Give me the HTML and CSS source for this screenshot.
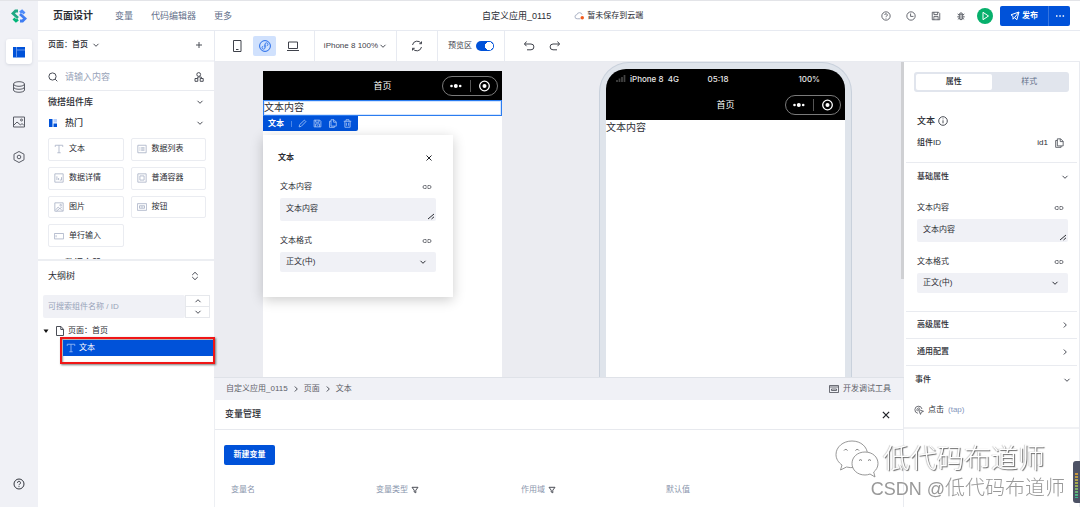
FILE: index.html
```html
<!DOCTYPE html>
<html lang="zh-CN">
<head>
<meta charset="utf-8">
<title>页面设计</title>
<link rel="stylesheet" href="styles.css">
</head>
<body>
<svg class="sprite" aria-hidden="true">
  <symbol id="down" viewBox="0 0 8 8"><path d="M1.500 2.800l2.500 2.500L6.500 2.800"/></symbol>
  <symbol id="up" viewBox="0 0 8 8"><path d="M1.500 5.200L4 2.700 6.500 5.200"/></symbol>
  <symbol id="right" viewBox="0 0 8 8"><path d="M2.800 1.500L5.300 4 2.800 6.500"/></symbol>
  <symbol id="cross" viewBox="0 0 8 8"><path d="M1.500 1.500l5 5M6.500 1.500l-5 5"/></symbol>
  <symbol id="link" viewBox="0 0 10 8"><path d="M4.300 2.500H2.500a1.500 1.500 0 0 0 0 3h1.800M5.700 2.500h1.800a1.500 1.500 0 0 1 0 3H5.700M3.500 4h3" stroke-width=".8"/></symbol>
  <symbol id="help" viewBox="0 0 12 12"><circle cx="6" cy="6" r="5"/><path d="M4.500 4.800a1.500 1.500 0 1 1 2.200 1.300Q6 6.500 6 7.200M6 8.200v.9"/></symbol>
  <symbol id="save" viewBox="0 0 12 12"><path d="M1.500 1.500h7.500l1.500 1.500v7.500h-9zM3.500 1.500v2.800h4.500V1.500M3.500 10.500V6.500h5v4M5.500 8.500h1"/></symbol>
  <symbol id="copy" viewBox="0 0 12 12"><path d="M4 1h4l3 3v5.500H4zM7.500 1v3.300H11M4 3H2v8.200h6.500V9.500"/></symbol>
  <symbol id="text" viewBox="0 0 12 12"><path d="M1.500 3.500v-2h9v2M6 1.500v9M4 10.500h4"/></symbol>
  <symbol id="picture" viewBox="0 0 12 12"><path d="M1 1h10v10H1zM2 9.500l3-3.500 2 2L9.500 6M3 11l4-3.500 3 3"/><circle cx="8" cy="3.800" r="1"/></symbol>
  <symbol id="resize" viewBox="0 0 8 8"><path d="M1 7l6-5M4.500 7L7 4.800"/></symbol>
  <symbol id="filter" viewBox="0 0 8 8"><path d="M1 1.300h6L4.800 4.200v2.600L3.200 6V4.200z"/></symbol>
  <symbol id="capsule" viewBox="0 0 56 20"><rect x=".5" y=".5" width="55" height="19" rx="9.500" fill="#000" stroke="#999" stroke-width=".8"/><path d="M28.500 4v12" stroke="#555"/><g fill="#fff" stroke="none"><circle cx="9.500" cy="10" r="1.300"/><circle cx="13.800" cy="10" r="2"/><circle cx="18.200" cy="10" r="1.300"/><circle cx="42.500" cy="10" r="2"/></g><circle cx="42.500" cy="10" r="4.800" stroke="#fff" stroke-width="1.300"/></symbol>
</svg>

<div class="app">
  <nav class="rail" aria-label="主导航">
    <svg class="logo" viewBox="0 0 16 14"><path d="M7 2H4.500L2 4.500 7 9" stroke="#20a884" stroke-width="2.800"/><path d="M2.500 9.500L5 12l2-1.500" stroke="#00b578" stroke-width="2.800"/><path d="M9 12h2.500L14 9.500 9 5" stroke="#3f7df2" stroke-width="2.800"/><path d="M13.500 4.500L11 2 9 3.500" stroke="#4c8bfa" stroke-width="2.800"/></svg>
    <button class="rail-btn active" aria-label="页面"><svg viewBox="0 0 12 12"><path d="M0 1h12v10.500H0z" fill="#0052d9" stroke="none"/><path d="M3.500 1v10.500M3.500 4H12" stroke="#8db2f2" stroke-width=".7"/></svg></button>
    <button class="rail-btn" aria-label="数据"><svg viewBox="0 0 12 12"><ellipse cx="6" cy="3" rx="5.500" ry="2.300"/><path d="M.5 3v6c0 3 11 3 11 0V3M.5 6c0 3 11 3 11 0"/></svg></button>
    <button class="rail-btn" aria-label="素材"><svg viewBox="0 0 12 12"><path d="M.5 1h11v10H.5zM1 9l3-3 3.500 3L9 7.500l2 2"/><circle cx="8.500" cy="4" r="1"/></svg></button>
    <button class="rail-btn" aria-label="设置"><svg viewBox="0 0 12 12"><path d="M6 .5l5 2.700v5.600L6 11.500 1 8.800V3.200z"/><circle cx="6" cy="6" r="1.800"/></svg></button>
    <button class="rail-btn last" aria-label="帮助"><svg><use href="#help"/></svg></button>
  </nav>

  <header class="header">
    <h1>页面设计</h1>
    <nav class="menu"><a href="#">变量</a><a href="#">代码编辑器</a><a href="#">更多</a></nav>
    <div class="app-name"><span>自定义应用_0115</span>
      <span class="cloud"><svg viewBox="0 0 12 10"><path d="M7 8H3.500a2.200 2.200 0 0 1-.4-4.400 3 3 0 0 1 5.800 0" stroke="#a3acc0"/><circle cx="9" cy="7" r="1.900" fill="#f25b1d" stroke="none"/></svg>暂未保存到云端</span></div>
    <div class="actions">
      <button aria-label="帮助"><svg><use href="#help"/></svg></button>
      <button aria-label="历史"><svg viewBox="0 0 12 12"><circle cx="6" cy="6" r="5"/><path d="M5.500 3v3.500h3.500"/></svg></button>
      <button aria-label="保存"><svg><use href="#save"/></svg></button>
      <button aria-label="调试"><svg viewBox="0 0 12 12"><path d="M4 4h4v4.500a2 2 0 0 1-4 0zM4.200 4a1.800 1.800 0 0 1 3.600 0M6 5v5M4 5L2 3.500M4 7H1.500M4 8.500L2.200 10M8 5l2-1.500M8 7h2.500M8 8.500L9.800 10"/></svg></button>
      <button class="play" aria-label="预览"><svg viewBox="0 0 16 16"><circle cx="8" cy="8" r="8" fill="#07b06c" stroke="none"/><path d="M6 4.300L11.500 8 6 11.700z" stroke="#fff"/></svg></button>
      <div class="publish"><button><svg viewBox="0 0 10 10"><path d="M1 3.800L9 1 6.800 8.800 4.600 6.500 3 8.200V5.500zM4.600 6.500L9 1"/></svg>发布</button><button aria-label="更多操作"><svg viewBox="0 0 10 10"><path d="M1 5h1.500M4.300 5h1.500M7.600 5h1.500" stroke-width="1.400"/></svg></button></div>
    </div>
  </header>

  <aside class="library">
    <div class="page-row"><button>页面：首页<svg class="i8"><use href="#down"/></svg></button><button aria-label="新增"><svg class="i8" viewBox="0 0 8 8"><path d="M4 1v6M1 4h6"/></svg></button></div>
    <div class="search-row"><svg class="i10" viewBox="0 0 10 10"><circle cx="4.500" cy="4.500" r="3.600"/><path d="M7.200 7.200L9.300 9.300"/></svg><input type="text" aria-label="搜索组件" placeholder="请输入内容"><svg class="i10" viewBox="0 0 10 10"><circle cx="4.700" cy="2.500" r="1.900"/><path d="M1 6.500h2.800v2.800H1zM3.800 6.500V5h3.500v1.500M6.200 6.500h3v2.800h-3z"/></svg></div>
    <div class="components">
      <button class="group">微搭组件库<svg class="i8"><use href="#down"/></svg></button>
      <button class="group"><svg class="i8 lead" viewBox="0 0 8 8"><g stroke="none"><path d="M0 0h3.500v8H0z" fill="#0052d9"/><path d="M4.500 0H8v3.500H4.500z" fill="#b9d0fb"/><path d="M4.500 4.500H8V8H4.500z" fill="#0052d9"/></g></svg><span>热门</span><svg class="i8"><use href="#down"/></svg></button>
      <div class="cards">
        <button><svg><use href="#text"/></svg>文本</button>
        <button><svg viewBox="0 0 12 12"><path d="M1 1.500h10v9H1zM5 4.500h4M5 6h4M5 7.500h4M3 4.500h1M3 6h1M3 7.500h1"/></svg>数据列表</button>
        <button><svg viewBox="0 0 12 12"><path d="M1 1h10v10H1zM3.500 8.500V4M5.500 8.500V6M7 8.500h2V5"/></svg>数据详情</button>
        <button><svg viewBox="0 0 12 12"><path d="M1 1h10v10H1zM3.500 3.500h5v5h-5z"/></svg>普通容器</button>
        <button><svg><use href="#picture"/></svg>图片</button>
        <button><svg viewBox="0 0 12 12"><path d="M.5 2h11v8H.5zM3 4.500h6v3H3zM4.500 6h3"/></svg>按钮</button>
        <button><svg viewBox="0 0 12 12"><path d="M.5 3h11v6.500H.5zM2.500 5v2.500"/></svg>单行输入</button>
      </div>
      <button class="group"><svg class="i8 lead" viewBox="0 0 8 8"><path d="M4 0l4 4-4 4-4-4z" fill="#0052d9" stroke="none"/></svg><span>数据容器</span><svg class="i8"><use href="#down"/></svg></button>
    </div>
    <section class="outline">
      <div class="outline-head"><h2>大纲树</h2><svg class="i10" viewBox="0 0 10 10"><path d="M2.200 4L5 1.300 7.800 4M2.200 6L5 8.700 7.800 6"/></svg></div>
      <div class="outline-search"><input type="text" aria-label="搜索大纲" placeholder="可搜索组件名称 / ID"><div class="steps"><button aria-label="上一个"><svg class="i8"><use href="#up"/></svg></button><button aria-label="下一个"><svg class="i8"><use href="#down"/></svg></button></div></div>
      <div class="tree-root"><svg class="i8" viewBox="0 0 8 8"><path d="M1.500 2.500h5L4 6z" fill="#111" stroke="none"/></svg><svg class="i10" viewBox="0 0 10 10"><path d="M1.500.5h4.500l2.500 2.800v6.200h-7zM5.800.5v3h2.700"/></svg>页面：首页</div>
      <div class="marked"><button class="tree-item"><svg class="i10"><use href="#text"/></svg>文本</button></div>
    </section>
  </aside>

  <div class="toolbar">
    <div class="tools devices"><button aria-label="手机"><svg viewBox="0 0 12 12"><path d="M2.500.5h7.500v11H2.500zM5 9.500h2.500"/></svg></button><button class="on" aria-label="小程序"><svg viewBox="0 0 12 12"><circle cx="6" cy="6" r="5.400"/><path d="M6 7.500V4.300a1.500 1.500 0 1 1 1.700 1.500M6 4.500v3.200a1.500 1.500 0 1 1-1.700-1.500" stroke-width=".8"/></svg></button><button aria-label="电脑"><svg viewBox="0 0 12 12"><path d="M1.500 2h9v6.500h-9zM0 10.500h12"/></svg></button></div>
    <div class="tools zoom"><button>iPhone 8 100%<svg class="i8"><use href="#down"/></svg></button></div>
    <div class="tools refresh"><button aria-label="刷新"><svg viewBox="0 0 12 12"><path d="M1.500 5a4.700 4.700 0 0 1 8.700-1.500M10.500 7a4.700 4.700 0 0 1-8.700 1.500M10.500 1.500v2.200H8.300M1.500 10.500V8.300h2.200"/></svg></button></div>
    <div class="tools preview"><label for="preview">预览区</label><input id="preview" class="switch" type="checkbox" role="switch" checked></div>
    <div class="tools history"><button aria-label="撤销"><svg viewBox="0 0 12 12"><path d="M3.500 1.500L1.500 4l2 2.200M1.500 4H8a2.800 2.800 0 0 1 0 5.800H4"/></svg></button><button aria-label="重做"><svg viewBox="0 0 12 12"><path d="M8.500 1.500l2 2.500-2 2.200M10.500 4H4a2.800 2.800 0 0 0 0 5.800h4"/></svg></button></div>
  </div>

  <main class="work">
    <div class="canvas">
      <div class="editor">
        <div class="nav-bar">首页<svg class="capsule"><use href="#capsule"/></svg></div>
        <div class="selected">文本内容</div>
        <div class="quick"><b>文本</b><i></i><button aria-label="编辑"><svg viewBox="0 0 12 12"><path d="M1.500 10.500l.7-3L8.500 1.500l2 2-6.200 6.300z"/></svg></button><button aria-label="保存"><svg><use href="#save"/></svg></button><button aria-label="复制"><svg><use href="#copy"/></svg></button><button aria-label="删除"><svg viewBox="0 0 12 12"><path d="M1 3h10M4 3V1h4v2M2.500 3v8h7V3M4.500 5v4M7.500 5v4"/></svg></button></div>
        <div class="popover">
          <div class="popover-head"><h2>文本</h2><button aria-label="关闭"><svg class="i8"><use href="#cross"/></svg></button></div>
          <div class="field"><label for="p-text">文本内容</label><svg class="link"><use href="#link"/></svg><div class="control"><textarea id="p-text">文本内容</textarea><svg class="grip"><use href="#resize"/></svg></div></div>
          <div class="field"><label for="p-format">文本格式</label><svg class="link"><use href="#link"/></svg><div class="control"><select id="p-format"><option>正文(中)</option></select><svg class="arrow"><use href="#down"/></svg></div></div>
        </div>
      </div>
      <div class="device">
        <div class="status"><span><svg class="i10" viewBox="0 0 10 8"><path d="M1 8V6M3.500 8V4.500M6 8V3M8.500 8V1" stroke="#444" stroke-width="1.700"/></svg>iPhone 8&nbsp; 4G</span><span>05:18</span><span>100%</span></div>
        <div class="nav-bar">首页<svg class="capsule"><use href="#capsule"/></svg></div>
        <div class="screen">文本内容</div>
      </div>
      <div class="scroll"></div>
    </div>
    <div class="crumbs"><span>自定义应用_0115</span><svg class="i8"><use href="#right"/></svg><span>页面</span><svg class="i8"><use href="#right"/></svg><span>文本</span><button><svg class="i10" viewBox="0 0 10 10"><path d="M.5 1.500h9v7h-9zM.5 3h9M2.500 5h5v1.500h-5z" stroke-width=".8"/></svg>开发调试工具</button></div>
    <section class="variables">
      <div class="var-head"><h2>变量管理</h2><button aria-label="关闭"><svg class="i10"><use href="#cross"/></svg></button></div>
      <div class="var-body"><button class="create">新建变量</button>
        <table><thead><tr><th>变量名</th><th>变量类型<svg class="i8"><use href="#filter"/></svg></th><th>作用域<svg class="i8"><use href="#filter"/></svg></th><th>默认值</th></tr></thead></table></div>
    </section>
  </main>

  <aside class="props">
    <div class="tabs"><button class="current">属性</button><button>样式</button></div>
    <div class="identity"><h2>文本<svg class="i10" viewBox="0 0 10 10"><circle cx="5" cy="5" r="4.300"/><path d="M5 4.300v3M5 2.500v.8"/></svg></h2><div class="id-row"><b>组件ID</b><span>id1</span><svg class="i10"><use href="#copy"/></svg></div></div>
    <section class="basic">
      <button class="fold">基础属性<svg class="i8"><use href="#down"/></svg></button>
      <div class="field"><label for="r-text">文本内容</label><svg class="link"><use href="#link"/></svg><div class="control"><textarea id="r-text">文本内容</textarea><svg class="grip"><use href="#resize"/></svg></div></div>
      <div class="field"><label for="r-format">文本格式</label><svg class="link"><use href="#link"/></svg><div class="control"><select id="r-format"><option>正文(中)</option></select><svg class="arrow"><use href="#down"/></svg></div></div>
    </section>
    <button class="fold">高级属性<svg class="i8"><use href="#right"/></svg></button>
    <button class="fold">通用配置<svg class="i8"><use href="#right"/></svg></button>
    <section class="events"><button class="fold">事件<svg class="i8"><use href="#down"/></svg></button><button class="event"><svg class="i10" viewBox="0 0 10 10"><path d="M3.800 8.300A3.600 3.600 0 1 1 8 4M3.500 6.200A1.700 1.700 0 1 1 6 3.500M4.500 4.500l5 1.800-2.200.9-.8 2.200z" stroke-width=".8"/></svg>点击 <span>(tap)</span></button></section>
  </aside>
</div>

<div class="watermark">
  <div class="account"><svg viewBox="0 0 44 38"><g fill="#fff" stroke="#8b8b8b" stroke-width=".9"><path d="M17 1C8 1 1 7 1 14.500c0 4.500 2.500 8 6 10.500L5.500 30l6-3c10 2.500 21-2.500 21-12.500C32.500 7 26 1 17 1z"/><path d="M30 12c-7.500 0-13 5-13 11.500S22.500 35 30 35c1.700 0 3.400-.3 5-1l5 3-1.300-5c2.600-2 4.300-5 4.300-8.500C43 17 37.500 12 30 12z"/></g><g fill="none" stroke="#777"><path d="M9 10.500a2 2 0 0 1 3.500 0M20.500 10.500a2 2 0 0 1 3.500 0M24 20.500a2 2 0 0 1 3 0M33 20.500a2 2 0 0 1 3 0"/></g></svg>低代码布道师</div>
  <div class="site"><span>CSDN @</span>低代码布道师</div>
</div>
<div class="meter"><i></i></div>
</body>
</html>
```
FILE: styles.css
```css
* { box-sizing: border-box; }
body { margin: 0; font: 8px/12px "Liberation Sans", "Noto Sans CJK SC", sans-serif; color: #2b2d34; background: #fff; overflow: hidden; }
button, input, select, textarea { font: inherit; color: inherit; border: 0; background: none; padding: 0; margin: 0; min-width: 0; outline: none; }
button { display: flex; align-items: center; justify-content: center; text-align: left; }
h1, h2 { margin: 0; font-weight: bold; }
a { color: inherit; text-decoration: none; }
svg { display: block; flex: none; width: 10px; height: 10px; fill: none; stroke: currentColor; stroke-width: 1; }
.sprite { position: absolute; width: 0; height: 0; }
.i8 { width: 8px; height: 8px; color: #4b4e57; }
.i10 { width: 10px; height: 10px; color: #4b4e57; }
::placeholder { color: #98a3b9; opacity: 1; }

.app { display: grid; grid-template: 30px 31px minmax(0, 1fr) / 38px 176px minmax(0, 1fr) 176px; height: 100vh; border-top: 1px solid #e3e4e8; }

.rail { grid-row: 1 / 4; display: flex; flex-direction: column; align-items: center; gap: 10px; padding: 8px 0 11px; background: #f0f1f6; }
.logo { width: 16px; height: 14px; margin-bottom: 6px; }
.rail-btn { width: 26px; height: 25px; border-radius: 3px; color: #5a5d66; }
.rail-btn svg { width: 12px; height: 12px; }
.rail-btn.active { background: #fff; box-shadow: 0 1px 3px #d4d7df; }
.rail-btn.last { margin-top: auto; color: #33363e; }

.header { grid-column: 2 / 5; display: flex; align-items: center; justify-content: space-between; padding: 0 10px 0 15px; border-bottom: 1px solid #e7eaf1; position: relative; }
.header h1 { font-size: 10px; }
.menu { display: flex; gap: 18px; margin: 0 auto 0 22px; font-size: 9px; color: #64718b; }
.app-name { position: absolute; left: 444px; display: flex; gap: 23px; font-size: 9px; }
.cloud { display: flex; align-items: center; gap: 2px; font-size: 8px; }
.cloud svg { width: 11px; }
.actions { display: flex; align-items: center; gap: 15px; color: #4b4e57; }
.play { margin: 0 -8px 0 -4px; }
.play svg { width: 16px; height: 16px; }
.publish { display: flex; height: 20px; background: #0052d9; color: #fff; border-radius: 2px; font-weight: bold; }
.publish button { gap: 2px; width: 48px; }
.publish button + button { width: 22px; border-left: 1px solid #3474e0; }

.library { grid-row: 2 / 4; grid-column: 2; display: flex; flex-direction: column; min-height: 0; }
.page-row { display: flex; justify-content: space-between; height: 31px; flex: none; padding: 0 11px 2px 10px; border-bottom: 2px solid #f3f4f7; }
.page-row button { gap: 4px; font-weight: 500; }
.search-row { display: flex; align-items: center; gap: 7px; height: 29px; flex: none; padding: 2px 10px 0; border-bottom: 1px solid #e9ebf0; }
.search-row input { flex: 1; font-size: 9px; }
.components { height: 168px; flex: none; overflow: hidden; }
.group { width: 100%; height: 21px; padding: 0 10px; font-size: 9px; font-weight: 500; justify-content: space-between; }
.group span { flex: 1; margin-left: 8px; }
.group .lead { margin-left: 1px; }
.cards { display: grid; grid-template-columns: 1fr 1fr; grid-template-rows: repeat(4, 1fr); gap: 6px 7px; height: 109px; margin: 5px 8px 5px 10px; }
.cards button { justify-content: flex-start; gap: 5px; padding: 0 5px; border: 1px solid #eaecf1; border-radius: 2px; }
.cards svg { color: #a9b2c6; }
.outline { border-top: 2px solid #eceef2; flex: 1; }
.outline-head { display: flex; justify-content: space-between; align-items: center; height: 29px; padding: 0 14px 0 10px; }
.outline-head h2 { font-size: 9px; font-weight: 400; }
.outline-search { display: flex; height: 23px; margin: 5px 4px 0 5px; }
.outline-search input { flex: 1; padding: 0 5px; background: #f0f1f6; border-radius: 2px; }
.steps { display: grid; width: 25px; border: 1px solid #e6e8ec; }
.steps button + button { border-top: 1px solid #e6e8ec; }
.tree-root { display: flex; align-items: center; height: 19px; margin-top: 3px; padding-left: 4px; gap: 3px; }
.tree-root .i8 { margin-right: 2px; }
.marked { position: relative; width: 155px; height: 27px; margin: -3px 0 0 22px; padding: 1px 0 0 1px; border: 2px solid #f01616; box-shadow: 1px 1px 2px #777, inset 1px 1px 2px #999; z-index: 1; }
.tree-item { width: 100%; height: 16px; background: #0052d9; color: #fff; justify-content: flex-start; gap: 3px; padding-left: 3px; }
.tree-item svg { color: #9dbef5; }

.toolbar { grid-column: 3 / 5; display: flex; border-bottom: 1px solid #e9ebf0; border-left: 1px solid #e7eaf1; color: #3f424b; }
.tools { display: flex; align-items: center; justify-content: center; border-right: 1px solid #e7eaf1; }
.tools svg { width: 12px; height: 12px; }
.tools .i8 { width: 8px; height: 8px; }
.devices { width: 100px; gap: 5px; }
.devices button { width: 23px; height: 20px; border-radius: 2px; }
.devices .on { background: #d0e1fd; color: #2169e8; }
.zoom { width: 82px; }
.zoom button { gap: 1px; }
.refresh { width: 41px; }
.preview { width: 67px; gap: 4px; }
.switch { appearance: none; width: 18px; height: 10px; border-radius: 5px; background: radial-gradient(circle at 13px 5px, #fff 4px, #0052d9 4px); }
.history { gap: 14px; padding-left: 18px; border: 0; }

.work { grid-column: 3; display: flex; flex-direction: column; min-height: 0; }
.canvas { position: relative; display: flex; justify-content: space-between; height: 316px; flex: none; padding: 0 52px 0 49px; background: #ebecf1; border-bottom: 1px solid #dfe2e8; }
.scroll { position: absolute; right: 0; top: 0; width: 3px; height: 217px; background: #cfd0d3; }
.editor { position: relative; width: 239px; margin-top: 9px; background: #fff; }
.nav-bar { position: relative; display: flex; align-items: center; justify-content: center; height: 29px; background: #000; color: #fff; font-size: 9px; }
.capsule { position: absolute; right: 4px; width: 56px; height: 20px; }
.selected { height: 16px; border: 1px solid #2b7cf0; font-size: 10px; line-height: 13px; box-shadow: inset 0 0 0 1px #d4e5fd; }
.quick { display: flex; align-items: center; width: 95px; height: 15px; padding: 0 5px; gap: 6px; background: #0052d9; color: #fff; border-radius: 0 0 2px 0; }
.quick i { width: 1px; height: 6px; background: #4c87e8; margin-left: 1px; }
.quick svg { width: 9px; height: 9px; color: #b9d1fa; }
.popover { position: absolute; left: 0; top: 64px; width: 190px; height: 162px; padding: 16px 17px; background: #fff; box-shadow: 0 3px 12px #0003; }
.popover-head { display: flex; justify-content: space-between; height: 14px; margin: 0 3px 16px -2px; }
.popover-head h2 { font-size: 8px; line-height: 14px; }
.popover-head .i8 { color: #202228; }
.field { display: grid; grid-template-columns: 1fr 10px; row-gap: 5px; align-items: center; margin-bottom: 14px; }
.field .link { width: 10px; height: 8px; margin-left: -4px; color: #4b4e57; }
.control { position: relative; grid-column: 1 / 3; display: flex; }
.control textarea, .control select { width: 100%; height: 20px; padding: 0 6px; background: #f0f1f6; border-radius: 2px; appearance: none; }
.control textarea { height: 23px; padding-top: 5px; resize: none; overflow: hidden; }
.grip { position: absolute; right: 1px; bottom: 1px; width: 8px; height: 8px; }
.arrow { position: absolute; right: 9px; top: 6px; width: 8px; height: 8px; }
.device { width: 253px; padding: 6px 6px 0; background: #dfe4eb; border: 1px solid #c9d1dc; border-bottom: 0; border-radius: 30px 30px 0 0; display: flex; flex-direction: column; }
.status { display: grid; grid-template-columns: 1fr auto 1fr; align-items: center; height: 20px; padding: 0 25px 0 10px; background: #000; color: #e8e8e8; border-radius: 22px 22px 0 0; font: 500 8px/12px Inter, sans-serif; }
.status span { display: flex; gap: 4px; }
.status span:last-child { justify-content: flex-end; }
.device .nav-bar { height: 31px; }
.screen { flex: 1; background: #fff; font-size: 10px; line-height: 15px; }
.crumbs { display: flex; align-items: center; gap: 4px; height: 22px; flex: none; padding: 0 13px 0 12px; background: #f0f1f6; color: #5d6068; }
.crumbs button { margin-left: auto; gap: 4px; }
.variables { flex: 1; border-left: 1px solid #edeff3; }
.var-head { display: flex; justify-content: space-between; height: 30px; padding: 0 13px 0 10px; border-bottom: 1px solid #e7e9ee; }
.var-head h2 { font-size: 9px; line-height: 29px; font-weight: 500; }
.var-head svg { color: #202228; }
.var-body { padding: 15px 9px; }
.create { width: 51px; height: 20px; background: #0052d9; color: #fff; border-radius: 2px; font-weight: bold; }
table { width: 100%; margin-top: 15px; border-collapse: collapse; table-layout: fixed; }
th { width: 145px; height: 20px; padding: 0 7px; text-align: left; font-weight: 400; color: #8a96ad; }
th:last-child { width: auto; }
th svg { display: inline-block; margin-left: 3px; vertical-align: middle; color: #33363e; }

.props { grid-column: 4; display: flex; flex-direction: column; align-items: stretch; padding-top: 10px; border-left: 1px solid #e9ebf0; border-right: 1px solid #e9ebf0; margin-left: -1px; }
.tabs { display: grid; grid-template-columns: 1fr 1fr; height: 20px; margin: 0 10px; padding: 2px; background: #e1e5ed; border-radius: 3px; color: #64718b; }
.tabs .current { background: #fff; border-radius: 2px; color: #202228; font-weight: 500; }
.identity { height: 71px; margin: 0 2px; padding: 22px 13px 0 11px; border-bottom: 1px solid #e9ebf0; }
.identity h2 { display: flex; align-items: center; gap: 3px; font-size: 9px; font-weight: 500; line-height: 14px; }
.id-row { display: flex; align-items: center; gap: 6px; margin-top: 9px; }
.id-row b { flex: 1; font-weight: 500; }
.fold { justify-content: space-between; height: 27px; margin: 0 2px; padding: 0 8px 0 11px; border-bottom: 1px solid #e9ebf0; font-weight: 500; }
.basic { height: 149px; margin: 0 2px; border-bottom: 1px solid #e9ebf0; }
.basic .fold { width: 100%; margin: 0 0 12px; border: 0; }
.basic .field { margin: 0 9px 14px 11px; }
.events { height: 63px; border-bottom: 2px solid #f0f1f4; }
.events .fold { width: 100%; margin: 0; padding-left: 11px; border: 0; }
.event { height: 34px; padding-left: 10px; gap: 4px; }
.event span { color: #8496bd; }

.watermark { position: fixed; right: 15px; bottom: 5px; color: #fff; text-shadow: 1px 1px 1px #666, -1px 0 1px #ccc; text-align: right; }
.account { display: flex; align-items: center; margin-right: 20px; gap: 4px; height: 34px; font-size: 27px; font-weight: 300; line-height: 34px; }
.account svg { width: 44px; height: 38px; }
.site { color: #999; font-size: 20px; line-height: 25px; font-weight: 300; text-shadow: -1px -1px 0 #fff; }
.site span { font-size: 18px; }
.meter { position: fixed; right: 0; bottom: 4px; width: 7px; height: 42px; padding: 12px 2px 5px; background: #4d5265; border-radius: 3px 0 0 3px; }
.meter i { display: block; height: 100%; background: repeating-linear-gradient(transparent 0 2px, #4d5265 2px 3px), linear-gradient(#c9943d, #9fae54, #38b894); }
```
